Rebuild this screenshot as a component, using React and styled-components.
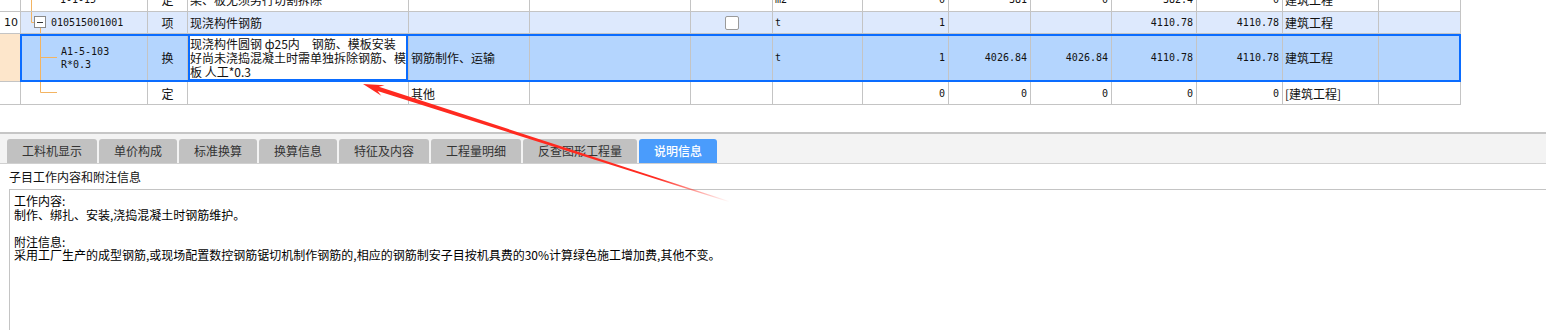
import React from 'react';
import styled, { createGlobalStyle, css } from 'styled-components';

const GlobalStyle = createGlobalStyle`
  html, body {
    margin: 0;
    padding: 0;
    background: #ffffff;
  }
  body {
    font-family: "Noto Sans CJK SC", "Noto Sans", sans-serif;
    font-size: 12px;
    color: #111;
  }
`;

const COLS = '21px 127px 40px 221px 121px 161px 82px 90px 86px 82px 81px 85px 86px 96px 82px';
const LINE = '#c4c4c4';
const BLUE = '#0a6cff';
const ORANGE = '#f3b462';
const MONO = '"DejaVu Sans Mono", "Liberation Mono", monospace';

const Page = styled.div`
  position: relative;
  width: 1546px;
  height: 330px;
  overflow: hidden;
`;

const Viewport = styled.div`
  height: 105px;
  overflow: hidden;
`;

const Table = styled.div`
  margin-top: -12px;
  width: 1461px;
`;

const Row = styled.div`
  display: grid;
  grid-template-columns: ${COLS};
  height: ${p => p.$h}px;
  background: ${p => p.$bg || '#fff'};
  position: relative;

  ${p => p.$selected && css`
    &::after {
      content: '';
      position: absolute;
      left: 20px;
      right: 0;
      top: 0;
      bottom: 0;
      border: 2px solid ${BLUE};
      pointer-events: none;
    }
  `}
`;

const Cell = styled.div`
  box-sizing: border-box;
  border-right: 1px solid ${LINE};
  border-bottom: 1px solid ${LINE};
  display: flex;
  align-items: center;
  justify-content: ${p => p.$align === 'right' ? 'flex-end' : p.$align === 'center' ? 'center' : 'flex-start'};
  padding: ${p => p.$align === 'right' ? '0 3px 0 2px' : '0 2px'};
  white-space: nowrap;
  overflow: hidden;
  background: ${p => p.$bg || 'transparent'};
  font-family: ${p => p.$mono ? MONO : '"Noto Sans CJK SC", sans-serif'};
  font-size: ${p => p.$mono ? '10px' : '12px'};
  color: #111;
`;

const IndexCell = styled(Cell)`
  font-family: "DejaVu Sans", sans-serif;
  font-size: 11px;
  padding-left: 4px;
`;

const CodeCell = styled(Cell)`
  padding: 0;
  align-items: flex-start;
`;

const CodeText = styled.div`
  align-self: center;
  margin-left: ${p => p.$gap}px;
  line-height: 13px;
  font-family: ${MONO};
  font-size: 10px;
`;

const EditCell = styled(Cell)`
  background: #fff;
  box-shadow: inset 0 0 0 2px ${BLUE};
  padding-left: 2px;
  line-height: 14px;
`;

const Check = styled.span`
  display: block;
  width: 12px;
  height: 12px;
  border: 1px solid #9a9a9a;
  border-radius: 2px;
  background: #fff;
`;

const TreeSvg = styled.svg`
  display: block;
  flex: none;
`;

const Tree = ({ kind, h }) => {
  const w = kind === 'root' ? 25 : 37;
  return (
    <TreeSvg width={w} height={h} viewBox={`0 0 ${w} ${h}`}>
      {kind === 'pass' && <line x1="10.5" y1="0" x2="10.5" y2={h} stroke={ORANGE} />}
      {kind === 'root' && (
        <g>
          <line x1="10.5" y1="0" x2="10.5" y2="10.5" stroke={ORANGE} />
          <line x1="10.5" y1="10.5" x2="13.5" y2="10.5" stroke={ORANGE} />
          <line x1="19.5" y1="15.5" x2="19.5" y2={h} stroke={ORANGE} />
          <rect x="13.5" y="4.5" width="11" height="11" fill="#fff" stroke="#8a8a8a" />
          <line x1="16" y1="10.5" x2="22" y2="10.5" stroke="#333" />
        </g>
      )}
      {kind === 'mid' && (
        <g>
          <line x1="19.5" y1="0" x2="19.5" y2={h} stroke={ORANGE} />
          <line x1="19.5" y1="23.5" x2="36" y2="23.5" stroke={ORANGE} />
        </g>
      )}
      {kind === 'last' && (
        <g>
          <line x1="19.5" y1="0" x2="19.5" y2="10.5" stroke={ORANGE} />
          <line x1="19.5" y1="10.5" x2="36" y2="10.5" stroke={ORANGE} />
        </g>
      )}
    </TreeSvg>
  );
};

const Divider = styled.div`
  margin-top: 27px;
  height: 2px;
  background: #c6c6c6;
`;

const TabBar = styled.div`
  box-sizing: border-box;
  height: 30px;
  background: #f3f3f3;
  border-bottom: 1px solid #d0d0d0;
  padding: 5px 0 0 7px;
  display: flex;
  gap: 2px;
`;

const Tab = styled.div`
  height: 24px;
  line-height: 24px;
  padding: 0 15px;
  border-radius: 3px 3px 0 0;
  font-size: 12px;
  background: ${p => p.$active ? '#4a9cfc' : '#c1c1c1'};
  color: ${p => p.$active ? '#fff' : '#333'};
  font-weight: ${p => p.$active ? 500 : 400};
`;

const Caption = styled.div`
  height: 25px;
  line-height: 25px;
  padding-left: 9px;
  font-size: 12px;
  color: #111;
`;

const InfoBox = styled.div`
  margin-left: 9px;
  height: 141px;
  border-top: 1px solid #c4c4c4;
  border-left: 1px solid #c4c4c4;
  padding: 4px 0 0 4px;
  font-size: 12px;
  line-height: 13.5px;
  color: #000;
  white-space: pre;
`;

const Overlay = styled.svg`
  position: absolute;
  left: 0;
  top: 0;
  pointer-events: none;
`;

const Arrow = () => (
  <Overlay width="1546" height="330" viewBox="0 0 1546 330">
    <defs>
      <linearGradient id="fade" gradientUnits="userSpaceOnUse" x1="0" y1="0" x2="385" y2="0">
        <stop offset="0" stopColor="#ff2a20" />
        <stop offset="0.8" stopColor="#ff2a20" />
        <stop offset="1" stopColor="#ff2a20" stopOpacity="0" />
      </linearGradient>
    </defs>
    <g transform="translate(363 84) rotate(17.8)">
      <polygon points="0,0 21,-5.5 16,-2.2 385,-0.5 385,0.5 16,2.2 21,5.5" fill="url(#fade)" />
    </g>
  </Overlay>
);

const tabs = ['工料机显示', '单价构成', '标准换算', '换算信息', '特征及内容', '工程量明细', '反查图形工程量', '说明信息'];

const info = `工作内容:
制作、绑扎、安装,浇捣混凝土时钢筋维护。

附注信息:
采用工厂生产的成型钢筋,或现场配置数控钢筋锯切机制作钢筋的,相应的钢筋制安子目按机具费的30%计算绿色施工增加费,其他不变。`;

export default function App() {
  return (
    <Page>
      <GlobalStyle />
      <Viewport>
        <Table>
          <Row $h={24}>
            <IndexCell />
            <CodeCell><Tree kind="pass" h={23} /><CodeText $gap={2}>1-1-15</CodeText></CodeCell>
            <Cell $align="center">定</Cell>
            <Cell>梁、板无须另行切割拆除</Cell>
            <Cell />
            <Cell />
            <Cell />
            <Cell $mono>m2</Cell>
            <Cell $align="right" $mono>0</Cell>
            <Cell $align="right" $mono>381</Cell>
            <Cell $align="right" $mono>0</Cell>
            <Cell $align="right" $mono>382.4</Cell>
            <Cell $align="right" $mono>0</Cell>
            <Cell>建筑工程</Cell>
            <Cell />
          </Row>

          <Row $h={22} $bg="#dde9fd">
            <IndexCell $bg="#fff">10</IndexCell>
            <CodeCell><Tree kind="root" h={21} /><CodeText $gap={5}>010515001001</CodeText></CodeCell>
            <Cell $align="center">项</Cell>
            <Cell>现浇构件钢筋</Cell>
            <Cell />
            <Cell />
            <Cell $align="center"><Check /></Cell>
            <Cell $mono>t</Cell>
            <Cell $align="right" $mono>1</Cell>
            <Cell />
            <Cell />
            <Cell $align="right" $mono>4110.78</Cell>
            <Cell $align="right" $mono>4110.78</Cell>
            <Cell>建筑工程</Cell>
            <Cell />
          </Row>

          <Row $h={48} $bg="#b4d5fe" $selected>
            <IndexCell $bg="#fde6cb" />
            <CodeCell>
              <Tree kind="mid" h={47} />
              <CodeText $gap={3}>A1-5-103<br />R*0.3</CodeText>
            </CodeCell>
            <Cell $align="center">换</Cell>
            <EditCell>
              <div>现浇构件圆钢 ф25内　钢筋、模板安装<br />好尚未浇捣混凝土时需单独拆除钢筋、模<br />板 人工*0.3</div>
            </EditCell>
            <Cell>钢筋制作、运输</Cell>
            <Cell />
            <Cell />
            <Cell $mono>t</Cell>
            <Cell $align="right" $mono>1</Cell>
            <Cell $align="right" $mono>4026.84</Cell>
            <Cell $align="right" $mono>4026.84</Cell>
            <Cell $align="right" $mono>4110.78</Cell>
            <Cell $align="right" $mono>4110.78</Cell>
            <Cell>建筑工程</Cell>
            <Cell />
          </Row>

          <Row $h={23}>
            <IndexCell />
            <CodeCell><Tree kind="last" h={22} /></CodeCell>
            <Cell $align="center">定</Cell>
            <Cell />
            <Cell>其他</Cell>
            <Cell />
            <Cell />
            <Cell />
            <Cell $align="right" $mono>0</Cell>
            <Cell $align="right" $mono>0</Cell>
            <Cell $align="right" $mono>0</Cell>
            <Cell $align="right" $mono>0</Cell>
            <Cell $align="right" $mono>0</Cell>
            <Cell>[建筑工程]</Cell>
            <Cell />
          </Row>
        </Table>
      </Viewport>

      <Divider />
      <TabBar>
        {tabs.map(t => <Tab key={t} $active={t === '说明信息'}>{t}</Tab>)}
      </TabBar>
      <Caption>子目工作内容和附注信息</Caption>
      <InfoBox>{info}</InfoBox>

      <Arrow />
    </Page>
  );
}
